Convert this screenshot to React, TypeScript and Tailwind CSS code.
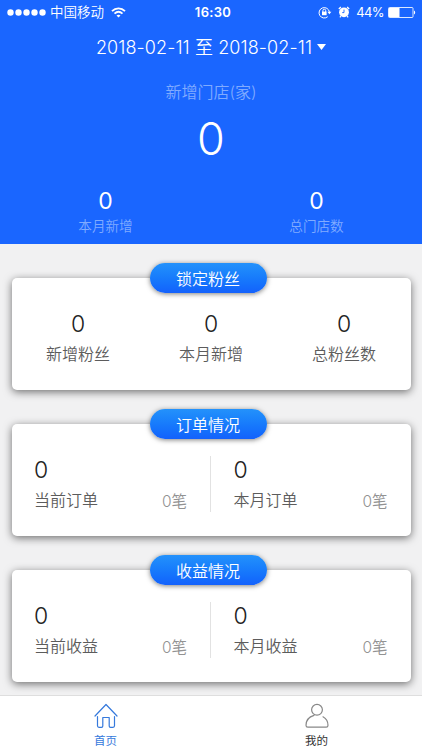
import React from 'react';

interface Stat {
  id: string;
  value: string;
  label: string;
  count?: string;
}

const storeStats: Stat[] = [
  { id: 'month', value: '0', label: '本月新增' },
  { id: 'total', value: '0', label: '总门店数' }
];

const fanStats: Stat[] = [
  { id: 'new', value: '0', label: '新增粉丝' },
  { id: 'month', value: '0', label: '本月新增' },
  { id: 'total', value: '0', label: '总粉丝数' }
];

const orderStats: Stat[] = [
  { id: 'current', value: '0', label: '当前订单', count: '0笔' },
  { id: 'month', value: '0', label: '本月订单', count: '0笔' }
];

const incomeStats: Stat[] = [
  { id: 'current', value: '0', label: '当前收益', count: '0笔' },
  { id: 'month', value: '0', label: '本月收益', count: '0笔' }
];

const StatusBar = () => (
  <div className="grid h-6 grid-cols-[1fr_auto_1fr] items-center pl-[7px] pr-[6px]">
    <div className="flex items-center">
      <div className="flex gap-px">
        {[1, 2, 3, 4, 5].map((dot) => (
          <svg key={dot} className="h-[7px] w-[7px]" viewBox="0 0 7 7">
            <circle cx="3.5" cy="3.5" r="3.2" fill="white" />
          </svg>
        ))}
      </div>
      <span className="ml-1 text-[13.5px] font-[350]">中国移动</span>
      <svg className="ml-[7px] h-[11px] w-[15px]" viewBox="0 0 15 11" fill="none" stroke="white" strokeWidth="1.8">
        <path d="M1 4.2C4.7.4 10.3.4 14 4.2" />
        <path d="M3.5 6.7c2.4-2.3 5.6-2.3 8 0" />
        <path d="M5.5 8.6c1.2-1 2.8-1 4 0l-2 2z" fill="white" stroke="none" />
      </svg>
    </div>
    <span className="pl-[3px] pt-px text-[13px] font-semibold tracking-[0.3px]">16:30</span>
    <div className="flex items-center justify-end">
      <svg className="h-[13px] w-[14px]" viewBox="0 0 14 13" fill="none" stroke="white">
        <path d="M9.7 10.7A5.2 5.2 0 1 1 11.4 6" />
        <path d="M9.4 5.7h4l-2 2.6z" fill="white" stroke="none" />
        <rect x="4" y="5.6" width="4.6" height="3.6" fill="white" stroke="none" />
        <path d="M4.9 6V4.6a1.4 1.4 0 0 1 2.8 0V6" />
      </svg>
      <svg className="ml-[6px] h-[12px] w-[12px]" viewBox="0 0 12 12">
        <circle cx="6" cy="6.3" r="4.9" fill="white" />
        <path d="M.8 3 2.9 1.1M11.2 3 9.1 1.1M2.8 10.2l-.9 1.1M9.2 10.2l.9 1.1" stroke="white" strokeWidth="1.3" />
        <path d="M6 3.6v3H4.2" fill="none" stroke="#1a66ff" strokeWidth="0.9" />
      </svg>
      <span className="ml-[6px] pt-px text-[13px] tracking-[-0.6px]">44%</span>
      <svg className="ml-[4px] h-[11px] w-[28px]" viewBox="0 0 28 11">
        <rect x="0.5" y="0.5" width="24.5" height="10" rx="1" fill="none" stroke="white" strokeOpacity="0.85" />
        <rect x="1" y="1" width="10.5" height="9" fill="white" />
        <path d="M26 3.5c1.6.6 1.6 3.4 0 4z" fill="white" />
      </svg>
    </div>
  </div>
);

const Panel = ({ title, children }: { title: string; children: React.ReactNode }) => (
  <section className="relative h-[112px] rounded-[5px] bg-white shadow-[0_2px_8px_rgba(0,0,0,0.55)]">
    <h2 className="absolute -top-[15px] left-[138px] flex h-[30px] w-[117px] items-center justify-center rounded-full bg-linear-to-b from-[#2492fb] to-[#1461fc] pt-px text-[16px] font-[350] text-white shadow-[0_1px_5px_rgba(0,0,0,0.5)]">
      {title}
    </h2>
    {children}
  </section>
);

const SplitStats = ({ stats }: { stats: Stat[] }) => (
  <div className="grid grid-cols-2 pt-8">
    {stats.map((stat) => (
      <div key={stat.id} className="h-14 border-r border-[#e2e2e2] pl-[22.5px] pr-[23px] last:border-r-0">
        <div className="h-7 text-[23px] font-[350] leading-[28px] text-[#222]">{stat.value}</div>
        <div className="flex items-center justify-between leading-[31px] text-[#5c5c5c]">
          <span className="text-[16px] font-[350]">{stat.label}</span>
          <span className="pt-0.5 text-[15.5px] font-[350] text-[#929292]">{stat.count}</span>
        </div>
      </div>
    ))}
  </div>
);

export default function App() {
  return (
    <div className="flex h-[750px] w-[422px] flex-col overflow-hidden bg-[#f1f1f2] font-['Inter','Noto_Sans_CJK_SC',sans-serif]">
      <header className="h-[244px] shrink-0 bg-[#1a66ff] text-white">
        <StatusBar />
        <div className="flex h-[46px] items-center justify-center gap-[5px]">
          <span className="text-[18px] font-[350] tracking-[0.1px]">2018-02-11 至 2018-02-11</span>
          <svg className="h-[6px] w-[9px]" viewBox="0 0 9 6" fill="white">
            <path d="M0 0h9L4.5 6z" />
          </svg>
        </div>
        <div className="pt-2 text-center text-[16px] font-[350] leading-7 text-[#80abff]">新增门店(家)</div>
        <div className="text-center text-[45px] font-[350] leading-[66px]">0</div>
        <div className="grid grid-cols-2 pt-4 text-center">
          {storeStats.map((stat) => (
            <div key={stat.id}>
              <div className="text-[23px] font-normal leading-[26px]">{stat.value}</div>
              <div className="text-[13.6px] font-[350] leading-[25px] text-[#80abff]">{stat.label}</div>
            </div>
          ))}
        </div>
      </header>

      <main className="flex flex-1 flex-col gap-[34px] px-[11.5px] pt-[34px]">
        <Panel title="锁定粉丝">
          <div className="grid grid-cols-3 pt-8 text-center">
            {fanStats.map((stat) => (
              <div key={stat.id}>
                <div className="h-7 text-[23px] font-[350] leading-[28px] text-[#222]">{stat.value}</div>
                <div className="text-[16px] font-[350] leading-8 text-[#5c5c5c]">{stat.label}</div>
              </div>
            ))}
          </div>
        </Panel>
        <Panel title="订单情况">
          <SplitStats stats={orderStats} />
        </Panel>
        <Panel title="收益情况">
          <SplitStats stats={incomeStats} />
        </Panel>
      </main>

      <nav className="z-10 grid h-[55px] shrink-0 grid-cols-2 border-t border-[#dedede] bg-white text-[11.5px]">
        <div className="flex flex-col items-center pt-[7px] text-[#3579dc]">
          <svg className="h-[26px] w-[26px]" viewBox="0 0 26 26" fill="none" stroke="currentColor" strokeWidth="1.2" strokeLinecap="round" strokeLinejoin="round">
            <path d="M2 13 13 1.5 24 13" />
            <path d="M4.5 13.5v9.3q0 1.5 1.5 1.5h2.5q1.3 0 1.3-1.3v-8.5h6.4v8.5q0 1.3 1.3 1.3H20q1.5 0 1.5-1.5v-9.3" />
          </svg>
          <span className="leading-[24px]">首页</span>
        </div>
        <div className="flex flex-col items-center pt-[7px] text-[#333]">
          <svg className="h-[26px] w-[26px]" viewBox="0 0 26 26" fill="none" stroke="#888" strokeWidth="1.2" strokeLinecap="round" strokeLinejoin="round">
            <circle cx="13" cy="6.8" r="5.4" />
            <path d="M10 12.3C5.2 13.7 2 17.6 2 22.3c0 1.2.6 1.9 1.8 1.9h18.4c1.2 0 1.8-.7 1.8-1.9 0-3.6-1.8-6.7-5-8.5" />
          </svg>
          <span className="leading-[24px]">我的</span>
        </div>
      </nav>
    </div>
  );
}
